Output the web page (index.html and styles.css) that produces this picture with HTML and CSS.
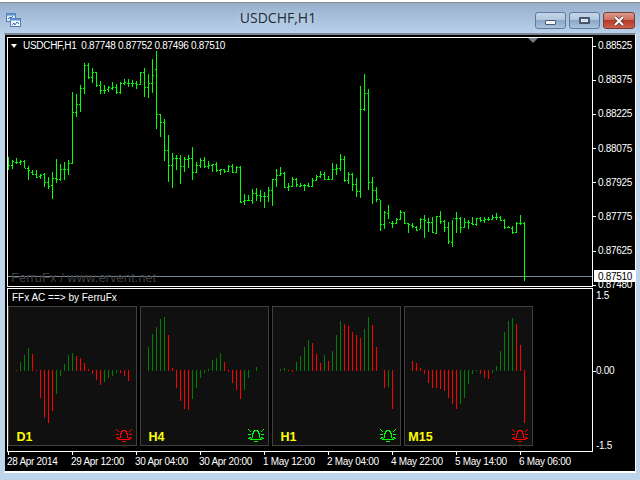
FILE: index.html
```html
<!DOCTYPE html>
<html lang="en">
<head>
  <meta charset="UTF-8">
  <title>USDCHF,H1</title>
  <link rel="stylesheet" href="styles.css">
</head>
<body>
  <div class="window">
    <div class="titlebar">
      <svg class="app-icon" width="15" height="14" viewBox="0 0 15 14">
        <rect x="0.5" y="0.5" width="9" height="8" fill="#dfeaf6" stroke="#4f7fb8"/>
        <rect x="0.5" y="0.5" width="9" height="2" fill="#5b8fd0"/>
        <path d="M2 6l2-2 1 1 2-2" fill="none" stroke="#3d6fae"/>
        <rect x="4.5" y="5.5" width="10" height="8" fill="#f2f7fc" stroke="#4f7fb8"/>
        <rect x="4.5" y="5.5" width="10" height="2" fill="#5b8fd0"/>
        <path d="M6 12l2-2 1 2 2-3 2 2" fill="none" stroke="#3d6fae"/>
      </svg>
      <div class="title">USDCHF,H1</div>
      <div class="win-buttons">
        <div class="win-btn"><span class="min-glyph"></span></div>
        <div class="win-btn"><span class="max-glyph"></span></div>
        <div class="win-btn win-close">
          <svg width="12" height="10" viewBox="0 0 12 10"><path d="M2 1l8 8M10 1l-8 8" stroke="#4a2a22" stroke-width="3.4"/><path d="M2 1l8 8M10 1l-8 8" stroke="#fff" stroke-width="2.2"/></svg>
        </div>
      </div>
    </div>

    <div class="client">
      <div class="chart-row main-row">
        <div class="pane">
          <svg id="price-chart" class="price-chart" width="584" height="248" viewBox="8 38 584 248"></svg>
          <div class="legend"><span class="legend-arrow"></span><span class="legend-text">USDCHF,H1  0.87748 0.87752 0.87496 0.87510</span></div>
          <span class="shift-marker"></span>
          <div class="watermark">FerruFx / www.ervent.net</div>
        </div>
        <div class="scale price-scale">
          <div class="tick">0.88525</div>
          <div class="tick">0.88375</div>
          <div class="tick">0.88225</div>
          <div class="tick">0.88075</div>
          <div class="tick">0.87925</div>
          <div class="tick">0.87775</div>
          <div class="tick">0.87625</div>
          <div class="tick">0.87480</div>
          <div class="bid-label">0.87510</div>
        </div>
      </div>

      <div class="chart-row sub-row">
        <div class="pane">
          <div class="sub-title">FFx AC ==&gt; by FerruFx</div>
          <div class="tf-panels">
            <div class="tf-panel">
              <svg class="hist" data-tf="D1" width="127" height="122" viewBox="1 1 127 122"></svg>
              <div class="tf-foot"><span class="tf-name">D1</span><svg class="bell bell-red" width="16" height="13" viewBox="0 0 16 13"><use href="#bell"/></svg></div>
            </div>
            <div class="tf-panel">
              <svg class="hist" data-tf="H4" width="127" height="122" viewBox="1 1 127 122"></svg>
              <div class="tf-foot"><span class="tf-name">H4</span><svg class="bell bell-green" width="16" height="13" viewBox="0 0 16 13"><use href="#bell"/></svg></div>
            </div>
            <div class="tf-panel">
              <svg class="hist" data-tf="H1" width="127" height="122" viewBox="1 1 127 122"></svg>
              <div class="tf-foot"><span class="tf-name">H1</span><svg class="bell bell-green" width="16" height="13" viewBox="0 0 16 13"><use href="#bell"/></svg></div>
            </div>
            <div class="tf-panel">
              <svg class="hist" data-tf="M15" width="127" height="122" viewBox="1 1 127 122"></svg>
              <div class="tf-foot"><span class="tf-name">M15</span><svg class="bell bell-red" width="16" height="13" viewBox="0 0 16 13"><use href="#bell"/></svg></div>
            </div>
          </div>
        </div>
        <div class="scale sub-scale">
          <div class="sub-tick">1.5</div>
          <div class="sub-tick has-mark">0.00</div>
          <div class="sub-tick">-1.5</div>
        </div>
      </div>

      <div class="time-axis">
        <div class="time-label"><span>28 Apr 2014</span></div>
        <div class="time-label"><span>29 Apr 12:00</span></div>
        <div class="time-label"><span>30 Apr 04:00</span></div>
        <div class="time-label"><span>30 Apr 20:00</span></div>
        <div class="time-label"><span>1 May 12:00</span></div>
        <div class="time-label"><span>2 May 04:00</span></div>
        <div class="time-label"><span>4 May 22:00</span></div>
        <div class="time-label"><span>5 May 14:00</span></div>
        <div class="time-label"><span>6 May 06:00</span></div>
      </div>
    </div>
  </div>

  <svg class="defs" width="0" height="0">
    <symbol id="bell" viewBox="0 0 16 13">
      <path d="M4.5 8.5V5.5L6.5 1.5H9.5L11.5 5.5V8.5L13.5 10.5H2.5L4.5 8.5ZM6 12.5H10M0 0L3 3M16 0L13 3M0 5.5H3M13 5.5H16M0 10L3 8M16 10L13 8" fill="none" stroke="currentColor"/>
    </symbol>
  </svg>
  <script src="script.js"></script>
</body>
</html>
```
FILE: styles.css
```css
* { box-sizing: border-box; }
body { margin: 0; width: 640px; height: 480px; overflow: hidden; background: #fff; font-family: "Liberation Sans", Arial, sans-serif; font-size: 10px; letter-spacing: -0.3px; color: #fff; }
.window {
  display: flex;
  flex-direction: column;
  height: 480px;
  margin-top: 2px;
  border-top: 1px solid #8b8b8b;
  border-bottom: 1px solid #bdeaf0;
  background: #bcd4ec;
}

/* title bar */
.titlebar {
  display: flex;
  align-items: flex-end;
  height: 30px;
  padding: 0 5px 4px 6px;
  background: linear-gradient(#97afcb, #b8d0ea);
}
.app-icon { flex-shrink: 0; margin-bottom: 2px; }
.title {
  flex: 1;
  text-align: center;
  font-family: "Open Sans", sans-serif;
  font-size: 14px;
  letter-spacing: 0;
  line-height: 19px;
  margin-bottom: 2px;
  color: #1d2a38;
  text-shadow: 0 0 6px #d5e4f3;
}
.win-buttons { display: flex; gap: 3px; }
.win-btn {
  display: flex;
  align-items: center;
  justify-content: center;
  width: 31px;
  height: 17px;
  border: 1px solid #5f7a9c;
  border-radius: 3px;
  background: linear-gradient(#c6d7ea 0%, #b1c7df 45%, #8ba7c6 50%, #a9c3de 100%);
}
.win-close { width: 32px; border-color: #7a3b33; background: linear-gradient(#dc9a8e 0%, #cf6f60 45%, #b63a28 50%, #c9604c 100%); }
.min-glyph { display: block; width: 11px; height: 5px; margin-top: 4px; border: 1px solid #4a5a70; border-radius: 1px; background: #f2f6fa; }
.max-glyph { display: block; width: 11px; height: 7px; border: 2px solid #47566a; border-radius: 1px; background: #c4d4e6; box-shadow: 0 0 0 1px #e6eef6 inset; }

/* client area */
.client {
  flex: 1;
  margin: 0 4px 8px;
  padding: 2px 0 0 2px;
  border-top: 2px solid #7c8793;
  border-left: 1px solid #c9ced4;
  border-right: 1px solid #fff;
  border-bottom: 2px solid #fff;
  background: #000;
}
.chart-row { display: flex; }
.main-row { height: 250px; margin-bottom: 1px; }
.sub-row { height: 164px; }
.pane { position: relative; width: 586px; border: 1px solid #fff; }
.price-chart { display: block; }
.scale { position: relative; flex: 1; }

/* main pane overlays */
.legend { position: absolute; top: 2px; left: 3px; display: flex; align-items: center; gap: 6px; line-height: 12px; }
.legend-arrow { width: 0; height: 0; border-left: 3px solid transparent; border-right: 3px solid transparent; border-top: 4px solid #fff; }
.legend-text { white-space: pre; }
.shift-marker { position: absolute; top: 0; left: 520px; width: 0; height: 0; border-left: 5px solid transparent; border-right: 5px solid transparent; border-top: 5px solid #6f7c8a; }
.watermark { position: absolute; top: 232px; left: 3px; font-size: 13px; letter-spacing: 0; line-height: 15px; color: #3f3f3f; white-space: nowrap; }

/* price scale */
.price-scale { display: flex; flex-direction: column; gap: 22.2px; padding-top: 3px; }
.tick { display: flex; align-items: center; gap: 2px; height: 12px; line-height: 12px; }
.tick::before { content: ""; width: 3px; height: 1px; background: #fff; }
.bid-label { position: absolute; top: 233px; left: 1px; width: 41px; height: 12px; line-height: 14px; padding-left: 4px; background: #fff; color: #000; }

/* indicator pane */
.sub-title { height: 17px; padding: 3px 0 0 4px; letter-spacing: 0; line-height: 12px; }
.tf-panels { display: flex; gap: 3px; }
.tf-panel { width: 129px; height: 140px; border: 1px solid #404040; background: #101010; }
.hist { display: block; }
.tf-foot { display: flex; justify-content: space-between; align-items: flex-start; height: 16px; padding-right: 4px; }
.tf-name { width: 31px; margin-top: 1px; text-align: center; font-size: 12.5px; font-weight: bold; letter-spacing: 0; line-height: 14px; color: #ff0; }
.bell { display: block; shape-rendering: crispEdges; }
.bell-red { color: #f00; }
.bell-green { color: #0f0; }
.defs { position: absolute; }

/* indicator scale */
.sub-scale { display: flex; flex-direction: column; gap: 63px; padding: 2px 0 0 3px; }
.sub-tick { position: relative; height: 12px; line-height: 12px; }
.has-mark::before { content: ""; position: absolute; top: 6px; left: -3px; width: 3px; height: 1px; background: #fff; }

/* time axis */
.time-axis { display: flex; padding-left: 1px; }
.time-label { width: 64px; flex-shrink: 0; white-space: nowrap; line-height: 12px; }
.time-label::before { content: ""; display: block; width: 1px; height: 3px; margin-bottom: 1px; background: #fff; }
.time-label span { display: block; margin-left: -1px; }
```
FILE: script.js
```js
// OHLC bars as screen y: [high, low, open, close], grouped in thirds of a pixel
var groups = [
  { top: 50, bars: [
    [322,360,344,344],[330,357,345,333],[324,342,336,336],[330,345,336,333],[330,354,333,354],[348,390,354,360],
    [360,375,366,372],[360,384,372,381],[372,387,378,375],[369,411,372,396],[381,417,396,408],[366,447,405,384],
    [327,399,384,387],[342,393,387,357],[336,390,357,357],[330,375,357,339],[126,342,339,186],[132,201,186,162],
    [105,186,162,114],[39,132,114,45],[39,87,45,81],[54,99,81,66],[66,111,66,105],[93,132,105,120],
    [105,132,120,120],[108,126,117,111],[96,120,114,111],[102,132,111,126],[96,132,126,99],[87,105,99,96],
    [87,111,99,99],[90,111,99,99],
    [93,117,99,102],[66,105,102,66],[54,141,66,111],[72,144,111,99],[27,129,99,75],[3,237,57,192],
    [192,261,192,216],[207,333,216,300],[255,396,300,345],[309,414,345,324],[315,360,324,324],[315,402,324,348],
    [321,366,348,327],[315,354,327,324],[291,390,324,366],[336,369,366,345],[324,354,345,330],[321,354,330,348],
    [333,357,348,345],[342,366,345,342],[336,366,342,360],[357,375,360,357],[357,369,357,363],[345,366,363,348],
    [342,369,348,366],[348,369,366,351],[348,459,351,456],[432,465,453,450],[435,453,450,450],[417,462,450,429],
    [414,453,429,435],[420,456,435,438]
  ] },
  { top: 70, bars: [
    [366,414,378,378],[351,396,378,360],[327,408,360,327],[297,351,327,315],[291,318,315,309],[306,354,309,351],
    [339,363,351,348],[321,351,348,327],[324,351,327,342],[339,351,348,345],[342,363,345,345],[339,351,345,348],
    [324,351,348,330],[315,333,330,318],[303,324,318,312],[306,330,312,327],[318,330,327,327],[279,330,327,297],
    [282,315,297,294],[252,303,294,267],[258,336,267,330],[306,342,330,312],[309,363,312,342],[324,381,342,363],
    [48,384,363,117],[12,123,117,69],[57,360,69,336],[321,402,336,360],[351,396,360,387],[390,483,387,462],
    [423,477,462,426],[405,447,429,456]
  ] },
  { top: 170, bars: [
    [153,174,159,159],[144,162,159,147],[120,150,147,126],[126,162,126,159],[159,189,159,162],[159,174,165,168],
    [168,183,171,180],[144,177,177,147],[135,204,147,150],[144,186,156,156],[141,189,156,186],[138,192,189,138],
    [123,162,138,153],[150,186,153,171],[156,222,171,213],[150,231,216,144],[126,189,144,144],[141,189,144,171],
    [144,174,171,156],[150,177,156,156],[141,165,159,162],[144,168,162,144],[141,156,144,150],[141,159,150,147],
    [141,153,147,147],[135,150,147,141],[129,150,141,141],[138,153,141,150],[147,177,150,171],[168,174,171,171],
    [168,192,174,186],[156,189,186,159],[135,165,159,159],[156,333,159,318]
  ] }
];

var hist = {
  D1: { v: [1,9,16,23,17,1,-28,-48,-53,-41,-24,-6,7,16,18,15,13,8,2,-4,-10,-15,-12,-8,-6,-3,-3,-6,-11], c: 'rgggrrrrrrgggggrrrrrrrggggrrr' },
  H4: { v: [24,37,44,52,54,36,3,-18,-31,-39,-40,-29,-18,-8,-3,2,11,13,18,9,-2,-13,-20,-29,-20,-8,0,4], c: 'gggggrrrrrrggggggggrrrrrgggg' },
  H1: { v: [2,3,1,-2,9,15,24,31,28,17,8,16,10,20,36,50,47,45,39,36,33,42,54,46,24,0,-18,-17,-39], c: 'ggrrggggrrrgrgggrrrrrggrrgrgr' },
  M15: { v: [10,8,3,-4,-13,-18,-18,-19,-21,-28,-34,-39,-34,-28,-14,-4,-1,-4,-8,-9,-3,5,20,39,50,53,47,26,-53], c: 'rrrrrrrrrrrrgggggrrrggggggrrr' }
};

function svgPath(d, color) {
  return '<path d="' + d + '" stroke="' + color + '" fill="none" shape-rendering="crispEdges"/>';
}

function drawPriceChart() {
  var d = '';
  var x = 8.5;
  groups.forEach(function (g) {
    g.bars.forEach(function (b) {
      var y = b.map(function (c) { return Math.round(g.top + c / 3); });
      d += 'M' + x + ' ' + y[0] + 'V' + y[1];
      d += 'M' + (x - 1.5) + ' ' + (y[2] + 0.5) + 'h1';
      d += 'M' + (x + 0.5) + ' ' + (y[3] + 0.5) + 'h1';
      x += 4;
    });
  });
  var bid = svgPath('M8 276.5H592', '#778899');
  document.getElementById('price-chart').innerHTML = bid + svgPath(d, '#00ff00');
}

function drawHistograms() {
  var base = 65;
  document.querySelectorAll('.hist').forEach(function (svg) {
    var data = hist[svg.dataset.tf];
    var green = '';
    var red = '';
    data.v.forEach(function (v, i) {
      if (v === 0) return;
      var x = 8.5 + i * 4;
      var seg = v > 0 ? 'M' + x + ' ' + (base - v) + 'V' + base : 'M' + x + ' ' + (base - 1) + 'V' + (base - 1 - v);
      if (data.c[i] === 'g') green += seg; else red += seg;
    });
    svg.innerHTML = svgPath(green, '#008000') + svgPath(red, '#ff0000');
  });
}

drawPriceChart();
drawHistograms();
```
